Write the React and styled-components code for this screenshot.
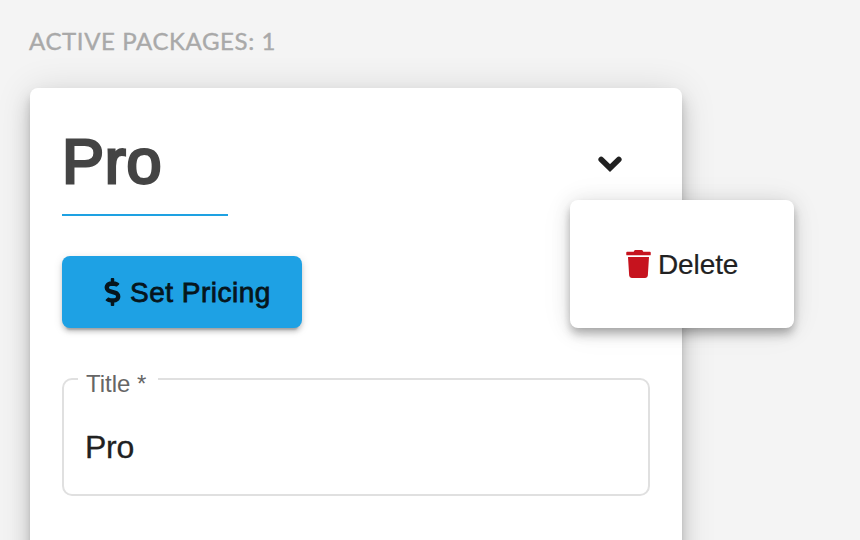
import React from 'react';
import styled, { createGlobalStyle } from 'styled-components';
import { FaDollarSign, FaTrash } from 'react-icons/fa';

const GlobalStyle = createGlobalStyle`
* {
  box-sizing: border-box;
}
body {
  margin: 0;
  height: 540px;
  overflow: hidden;
  background: #f4f4f4;
  color: #212121;
  font-family: "Liberation Sans", Arial, sans-serif;
}
`;

const PageWrap = styled.div`
height: 540px;
padding: 25px 30px 0;
overflow: hidden;
`;

const SectionLabel = styled.div`
height: 63px;
margin-left: -1px;
color: #a9a9a9;
font-family: Lato, sans-serif;
font-size: 24px;
line-height: 32px;
letter-spacing: 0.6px;
white-space: nowrap;
-webkit-text-stroke: 0.4px #a9a9a9;
`;

const Card = styled.div`
width: 652px;
height: 620px;
padding: 32px;
border-radius: 8px;
background: #fff;
box-shadow: 0 6px 10px -2px rgba(0, 0, 0, 0.2), 0 12px 20px rgba(0, 0, 0, 0.14), 0 2px 36px rgba(0, 0, 0, 0.12);
`;

const CardHeader = styled.div`
display: flex;
justify-content: space-between;
height: 96px;
`;

const CardTitle = styled.h1`
width: 166px;
height: 96px;
margin: 0;
border-bottom: 2px solid #1ea1e2;
color: #444;
font-size: 63px;
font-weight: 400;
line-height: 82px;
letter-spacing: 0.8px;
-webkit-text-stroke: 2.8px #444;
`;

const MenuWrap = styled.div`
position: relative;
width: 80px;
height: 80px;
`;

const MenuButton = styled.button`
display: flex;
align-items: center;
justify-content: center;
width: 80px;
height: 80px;
padding: 8px 0 0;
border: 0;
background: none;
color: #212121;
`;

const Menu = styled.div`
position: absolute;
top: 80px;
left: 0;
width: 224px;
height: 128px;
padding: 32px 0;
border-radius: 8px;
background: #fff;
box-shadow: 0 4px 8px -2px rgba(0, 0, 0, 0.2), 0 8px 10px rgba(0, 0, 0, 0.14), 0 2px 20px rgba(0, 0, 0, 0.12), 0 2px 36px rgba(0, 0, 0, 0.05);
`;

const MenuItem = styled.div`
display: flex;
align-items: center;
gap: 7px;
height: 64px;
padding-left: 56px;
font-size: 28px;
letter-spacing: -0.1px;
-webkit-text-stroke: 0.2px #212121;

span {
  padding-top: 2px;
}

svg {
  width: 25px;
  height: 28px;
  color: #c6131e;
  stroke: none;
}
`;

const PricingButton = styled.button`
display: flex;
align-items: center;
gap: 9px;
width: 240px;
height: 72px;
margin-top: 40px;
padding: 0 0 0 42px;
border: 0;
border-radius: 8px;
background: #1ea1e4;
color: #06151c;
font-family: inherit;
font-size: 28px;
letter-spacing: 0.5px;
white-space: nowrap;
-webkit-text-stroke: 0.8px #06151c;
box-shadow: 0 6px 2px -4px rgba(0, 0, 0, 0.2), 0 4px 4px rgba(0, 0, 0, 0.14), 0 2px 10px rgba(0, 0, 0, 0.12);

span {
  padding-top: 2px;
}

svg {
  width: 17px;
  height: 28px;
  stroke: none;
}
`;

const Field = styled.fieldset`
width: 588px;
height: 129px;
margin: 39px 0 0;
padding: 0 21px;
border: 2px solid #e0e0e0;
border-radius: 10px;
`;

const FieldLabel = styled.legend`
height: 24px;
margin-left: -7px;
padding: 0 12px 0 8px;
color: #666;
font-size: 24px;
line-height: 34px;
letter-spacing: 0;
`;

const FieldInput = styled.input`
display: block;
width: 100%;
height: 80px;
margin-top: 16px;
padding: 0;
border: 0;
outline: 0;
background: none;
color: #212121;
font-family: inherit;
font-size: 32px;
letter-spacing: -0.3px;
-webkit-text-stroke: 0.3px #212121;
`;

const ChevronIcon = () => (
  <svg width="24" height="18" viewBox="0 0 24 18" fill="none" stroke="currentColor" strokeWidth="5.6" strokeLinecap="round">
    <path d="M3.2 4.4L12 13L20.8 4.4" />
  </svg>
);

class App extends React.Component {
  constructor(props) {
    super(props);
    this.state = { title: 'Pro', open: true };
    this.toggleMenu = this.toggleMenu.bind(this);
    this.changeTitle = this.changeTitle.bind(this);
  }

  toggleMenu() {
    const { open } = this.state;
    this.setState({ open: !open });
  }

  changeTitle(e) {
    this.setState({ title: e.target.value });
  }

  render() {
    const { title, open } = this.state;
    return (
      <PageWrap>
        <GlobalStyle />
        <SectionLabel>ACTIVE PACKAGES: 1</SectionLabel>
        <Card>
          <CardHeader>
            <CardTitle>{title}</CardTitle>
            <MenuWrap>
              <MenuButton type="button" aria-label="Package actions" onClick={this.toggleMenu}>
                <ChevronIcon />
              </MenuButton>
              {open && (
                <Menu>
                  <MenuItem>
                    <FaTrash />
                    <span>Delete</span>
                  </MenuItem>
                </Menu>
              )}
            </MenuWrap>
          </CardHeader>
          <PricingButton type="button">
            <FaDollarSign />
            <span>Set Pricing</span>
          </PricingButton>
          <Field>
            <FieldLabel>Title *</FieldLabel>
            <FieldInput value={title} onChange={this.changeTitle} />
          </Field>
        </Card>
      </PageWrap>
    );
  }
}

export default App;
